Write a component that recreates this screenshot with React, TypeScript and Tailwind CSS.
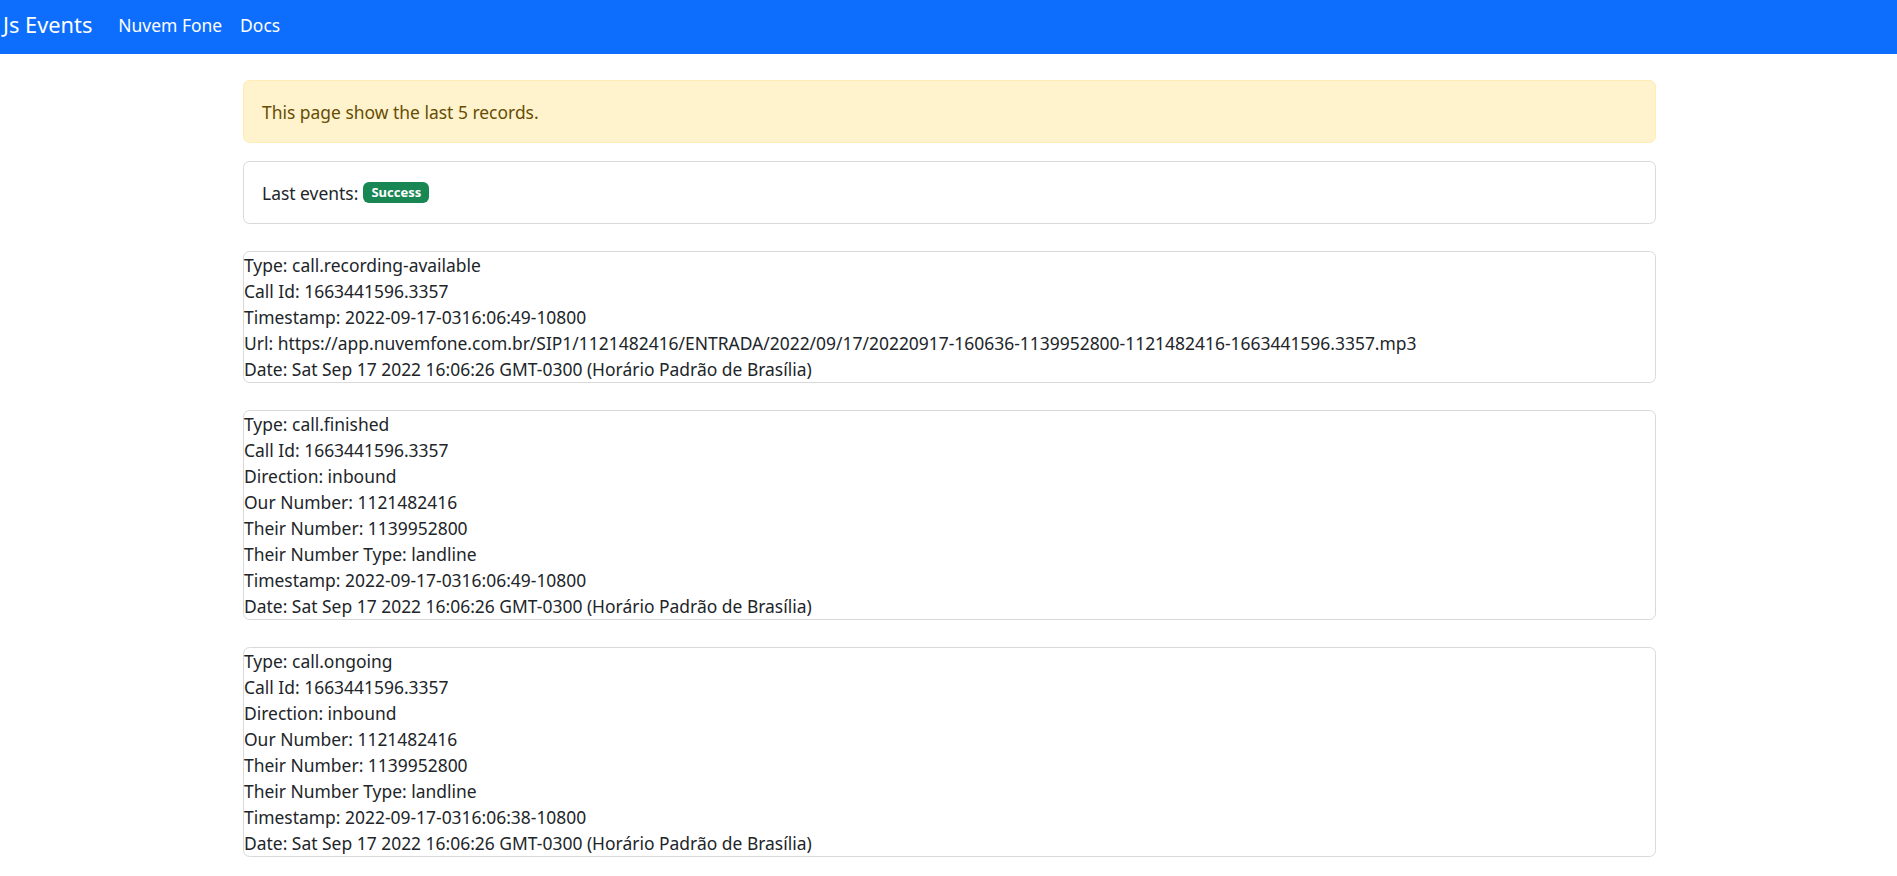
import React from "react";

type EventRecord = {
  id: string;
  lines: string[];
};

const records: EventRecord[] = [
  {
    id: "rec-1",
    lines: [
      "Type: call.recording-available",
      "Call Id: 1663441596.3357",
      "Timestamp: 2022-09-17-0316:06:49-10800",
      "Url: https://app.nuvemfone.com.br/SIP1/1121482416/ENTRADA/2022/09/17/20220917-160636-1139952800-1121482416-1663441596.3357.mp3",
      "Date: Sat Sep 17 2022 16:06:26 GMT-0300 (Horário Padrão de Brasília)",
    ],
  },
  {
    id: "rec-2",
    lines: [
      "Type: call.finished",
      "Call Id: 1663441596.3357",
      "Direction: inbound",
      "Our Number: 1121482416",
      "Their Number: 1139952800",
      "Their Number Type: landline",
      "Timestamp: 2022-09-17-0316:06:49-10800",
      "Date: Sat Sep 17 2022 16:06:26 GMT-0300 (Horário Padrão de Brasília)",
    ],
  },
  {
    id: "rec-3",
    lines: [
      "Type: call.ongoing",
      "Call Id: 1663441596.3357",
      "Direction: inbound",
      "Our Number: 1121482416",
      "Their Number: 1139952800",
      "Their Number Type: landline",
      "Timestamp: 2022-09-17-0316:06:38-10800",
      "Date: Sat Sep 17 2022 16:06:26 GMT-0300 (Horário Padrão de Brasília)",
    ],
  },
];

export default function App() {
  return (
    <div className="min-h-screen bg-white font-['Noto_Sans',sans-serif] text-[17.45px] leading-[26px] text-[#212529]">
      {/* Navbar */}
      <nav className="flex h-[54px] items-center bg-[#0d6efd] pb-[5px] pl-[3px]">
        <span className="mr-[17px] text-[21.8px] leading-[32px] text-white">
          Js Events
        </span>
        <a className="px-[9px] text-white" href="#">
          Nuvem Fone
        </a>
        <a className="px-[9px] text-white" href="#">
          Docs
        </a>
      </nav>

      <main className="ml-[243px] mt-[26px] flex w-[1413px] flex-col pb-[20px]">
        {/* Alert */}
        <div className="mb-[18px] rounded-[6.5px] border border-[#ffecb5] bg-[#fff3cd] px-[18px] py-[17.5px] text-[#664d03]">
          This page show the last 5 records.
        </div>

        {/* Status card */}
        <div className="mb-[27px] flex items-center rounded-[6.5px] border border-[#d9d9d9] px-[18px] py-[17.5px]">
          <span>Last events:</span>
          <span className="ml-[5px] inline-flex h-[21px] items-center rounded-[6px] bg-[#198754] px-[8px] text-[13px] font-bold leading-none text-white">
            Success
          </span>
        </div>

        {/* Records */}
        <div className="flex flex-col gap-[27px]">
          {records.map((record) => (
            <div
              key={record.id}
              className="rounded-[6.5px] border border-[#d9d9d9]"
            >
              {record.lines.map((line, i) => (
                <div key={i} className="whitespace-nowrap">
                  {line}
                </div>
              ))}
            </div>
          ))}
        </div>
      </main>
    </div>
  );
}
